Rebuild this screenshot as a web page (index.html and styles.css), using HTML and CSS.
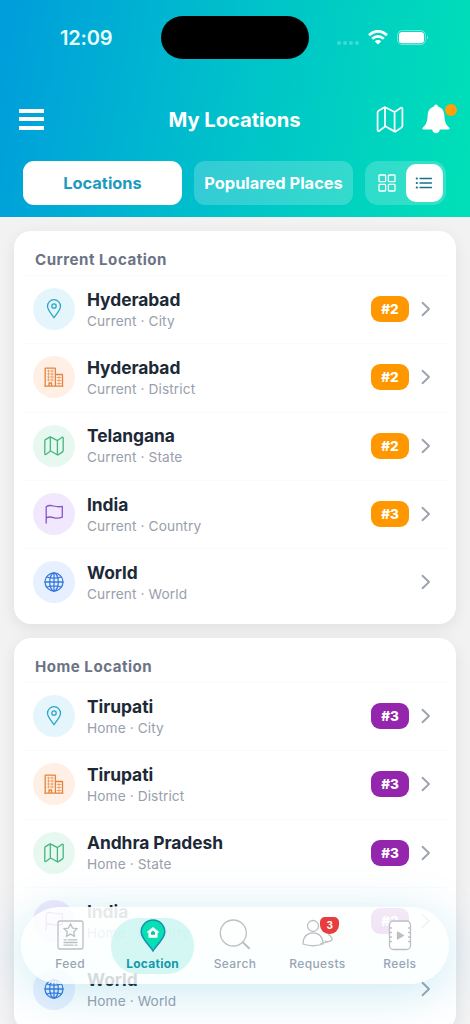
FILE: index.html
```html
<!DOCTYPE html>
<html lang="en">
<head>
<meta charset="utf-8">
<title>My Locations</title>
<link rel="stylesheet" href="styles.css">
</head>
<body>
<svg class="defs" width="0" height="0" aria-hidden="true">
  <symbol id="pin" viewBox="0 0 20 20"><path d="M10 18.800C8.300 15.600 3.500 11.200 3.500 7.200a6.500 6.500 0 0 1 13 0c0 4-4.800 8.400-6.500 11.600z"/><circle cx="10" cy="7" r="2.200"/></symbol>
  <symbol id="city" viewBox="0 0 20 20"><path d="M1.200 19V1.700q0-.6.6-.6h9q.6 0 .6.600V19M11.400 7.500h6.600q.5 0 .5.500v11M.7 19.200h18.300M5 19v-3h2.500v3"/><path d="M3.200 4h6.500M3.200 7h6.500M3.200 10h6.500M3.200 13h6.500M13 10.500h4M13 13.500h4M13 16.500h4M4.500 3v11M8 3v11M15 9.500V18" stroke-width=".8" opacity=".75"/></symbol>
  <symbol id="map" viewBox="0 0 20 20"><path d="M.8 5q0-.9.700-1.400L5.600 1.100q.6-.4 1.200 0l5.800 3q.6.400 1.200.1l4-2.700q1.400-.8 1.400.8v12.200q0 .9-.7 1.400l-4.100 2.900q-.6.300-1.200 0l-6-3.500q-.5-.3-1 0l-4 3Q.8 19.200.8 17.600zM6.300 1v14.200M13.400 4.300v14.600"/></symbol>
  <symbol id="flag" viewBox="0 0 20 20"><path d="M2.200 19V2.800Q5 .7 9.500 2t8.800.4v10.800q-4.300 1.700-8.800.4t-7.300.3"/></symbol>
  <symbol id="globe" viewBox="0 0 20 20"><circle cx="10" cy="10" r="9"/><ellipse cx="10" cy="10" rx="4.300" ry="9"/><path d="M10 1v18M1 10h18M2.800 5q7.200 2.300 14.400 0M2.800 15q7.200-2.300 14.400 0"/></symbol>
  <symbol id="chevron" viewBox="0 0 10 16"><path d="M1.500 1.800 8 8l-6.500 6.200"/></symbol>
</svg>

<header class="header">
  <div class="status">
    <span class="time">12:09</span>
    <span class="island"></span>
    <div class="signals">
      <span class="dots"><i></i><i></i><i></i><i></i></span>
      <svg class="wifi" viewBox="0 0 20 15"><g fill="none" stroke="#fff" stroke-width="2.700"><path d="M1 5.100Q10-2.600 19 5.100"/><path d="M4.200 8.800q5.800-4.900 11.600 0"/></g><path d="M10 14.500 6.700 11.200q3.300-2.600 6.600 0z" fill="#fff"/></svg>
      <svg class="battery" viewBox="0 0 32 16"><rect x=".6" y=".6" width="27.800" height="14" rx="4.500" fill="none" stroke="#fff" stroke-opacity=".45"/><rect x="2" y="2" width="25" height="11.200" rx="3.200" fill="#fff"/><path d="M30 5.500q2.200 2 0 4.300z" fill="#fff" fill-opacity=".5"/></svg>
    </div>
  </div>
  <div class="titlebar">
    <div class="menu"><i></i><i></i><i></i></div>
    <h1>My Locations</h1>
    <div class="actions">
      <svg class="map-action line"><use href="#map"/></svg>
      <div class="bell">
        <svg viewBox="0 0 28 30"><path d="M14 .5c1.200 0 1.800.8 1.900 2 4 1 6.100 4.100 6.400 8.500.4 7.200 1.600 9.600 4.600 12.200 1.300 1.300.5 2.300-.8 2.300h-8.300c-.5 5-7.100 5-7.600 0H1.900c-1.300 0-2.100-1-.8-2.300 3-2.600 4.200-5 4.600-12.200.3-4.400 2.400-7.500 6.400-8.500.1-1.200.7-2 1.900-2z" fill="#fff"/></svg>
        <span class="bell-dot"></span>
      </div>
    </div>
  </div>
  <div class="tabs">
    <div class="tab active">Locations</div>
    <div class="tab">Populared Places</div>
    <div class="views">
      <div class="view"><svg class="line" viewBox="0 0 18 18"><rect x="1" y="1" width="6.600" height="6.600" rx=".7"/><rect x="10.400" y="1" width="6.600" height="6.600" rx=".7"/><rect x="1" y="10.400" width="6.600" height="6.600" rx=".7"/><rect x="10.400" y="10.400" width="6.600" height="6.600" rx=".7"/></svg></div>
      <div class="view selected"><svg class="line" viewBox="0 0 18 18"><path d="M5 4.500h11.500M5 9h11.500M5 13.500h11.500"/><path d="M1.800 4.500h.1M1.800 9h.1M1.800 13.500h.1" stroke-width="2.200"/></svg></div>
    </div>
  </div>
</header>

<main class="content">
  <section class="card">
    <h2>Current Location</h2>
    <div class="row"><div class="icon blue"><svg class="line"><use href="#pin"/></svg></div><div class="text"><h3>Hyderabad</h3><p>Current · City</p></div><span class="rank">#2</span><svg class="chev line"><use href="#chevron"/></svg></div>
    <div class="row"><div class="icon orange"><svg class="line"><use href="#city"/></svg></div><div class="text"><h3>Hyderabad</h3><p>Current · District</p></div><span class="rank">#2</span><svg class="chev line"><use href="#chevron"/></svg></div>
    <div class="row"><div class="icon green"><svg class="line"><use href="#map"/></svg></div><div class="text"><h3>Telangana</h3><p>Current · State</p></div><span class="rank">#2</span><svg class="chev line"><use href="#chevron"/></svg></div>
    <div class="row"><div class="icon purple"><svg class="line"><use href="#flag"/></svg></div><div class="text"><h3>India</h3><p>Current · Country</p></div><span class="rank">#3</span><svg class="chev line"><use href="#chevron"/></svg></div>
    <div class="row"><div class="icon royal"><svg class="line"><use href="#globe"/></svg></div><div class="text"><h3>World</h3><p>Current · World</p></div><svg class="chev line"><use href="#chevron"/></svg></div>
  </section>
  <section class="card home">
    <h2>Home Location</h2>
    <div class="row"><div class="icon blue"><svg class="line"><use href="#pin"/></svg></div><div class="text"><h3>Tirupati</h3><p>Home · City</p></div><span class="rank">#3</span><svg class="chev line"><use href="#chevron"/></svg></div>
    <div class="row"><div class="icon orange"><svg class="line"><use href="#city"/></svg></div><div class="text"><h3>Tirupati</h3><p>Home · District</p></div><span class="rank">#3</span><svg class="chev line"><use href="#chevron"/></svg></div>
    <div class="row"><div class="icon green"><svg class="line"><use href="#map"/></svg></div><div class="text"><h3>Andhra Pradesh</h3><p>Home · State</p></div><span class="rank">#3</span><svg class="chev line"><use href="#chevron"/></svg></div>
    <div class="row"><div class="icon purple"><svg class="line"><use href="#flag"/></svg></div><div class="text"><h3>India</h3><p>Home · Country</p></div><span class="rank">#3</span><svg class="chev line"><use href="#chevron"/></svg></div>
    <div class="row"><div class="icon royal"><svg class="line"><use href="#globe"/></svg></div><div class="text"><h3>World</h3><p>Home · World</p></div><svg class="chev line"><use href="#chevron"/></svg></div>
  </section>
</main>

<nav class="nav">
  <div class="item">
    <svg class="line" viewBox="0 0 32 34"><rect x="4" y="3" width="25" height="28" rx="2"/><path d="m16.500 5.800 2 4.300 4.700.5-3.500 3.200.9 4.600-4.100-2.300-4.100 2.300.9-4.600-3.500-3.200 4.700-.5zM10 21.800h2.500M14.500 21.800h8.500M10 24.500h13M10 27.200h9M21 27.200h2"/></svg>
    <span>Feed</span>
  </div>
  <div class="item current">
    <svg viewBox="0 0 32 34"><path d="M16 33C13.300 28 4.200 21 4.200 13.800a11.800 11.800 0 0 1 23.600 0c0 7.200-9.100 14.200-11.800 19.200z" fill="#08dfb3" stroke="#168fb0" stroke-width="1.500"/><path d="m16 9.200 6 5.100h-1.700v5.200h-8.600v-5.200H10z" fill="#fff" stroke="#fff" stroke-linejoin="round" stroke-width=".5"/><path d="m16 12.500 2 1.800v2.500h-4v-2.500z" fill="#08c5a6"/></svg>
    <span>Location</span>
  </div>
  <div class="item">
    <svg class="line search" viewBox="0 0 32 34"><circle cx="14.300" cy="15" r="13"/><path d="m24 24.500 6 5.800" stroke-width="2"/></svg>
    <span>Search</span>
  </div>
  <div class="item">
    <svg class="line" viewBox="0 0 32 34"><circle cx="12" cy="8" r="5.500"/><path d="M2 26c0-7 4-11.200 10-11.200S22 19 22 26q-10 3.500-20 0zM20 25.500q8-1.500 11-3.500.5-3-3.500-5.500M24 23q4 1.500 7-1"/></svg>
    <b class="badge">3</b>
    <span>Requests</span>
  </div>
  <div class="item">
    <svg class="line" viewBox="0 0 32 34"><rect x="5.500" y="3" width="21" height="28.500" rx="4" fill="#fff"/><path d="M6 10h1.500M6 14.500h1.500M6 19h1.500M6 23.500h1.500M24.500 10h1.500M24.500 14.500h1.500M24.500 19h1.500M24.500 23.500h1.500"/><path d="m13.500 14 6 3.500-6 3.500z" fill="#bdbfc2"/></svg>
    <span>Reels</span>
  </div>
</nav>
</body>
</html>
```
FILE: styles.css
```css
* { box-sizing: border-box; }
body {
  margin: 0;
  width: 470px;
  height: 1024px;
  overflow: hidden;
  position: relative;
  background: #f2f2f3;
  font-family: Inter, "Liberation Sans", sans-serif;
  color: #1d2937;
}
h1, h2, h3, p { margin: 0; }
.defs { position: absolute; }
.line {
  fill: none;
  stroke: currentColor;
  stroke-width: 1.3;
  stroke-linecap: round;
  stroke-linejoin: round;
}

.header {
  height: 217px;
  padding-top: 16px;
  background: linear-gradient(100deg, #009fdb 3%, #00c2ca 50%, #00dfb8 98%);
  color: #fff;
}
.status {
  height: 43px;
  display: grid;
  grid-template-columns: 161px 148px 1fr;
  align-items: center;
}
.time {
  padding: 1px 0 0 60px;
  font-size: 20px;
  font-weight: 600;
  letter-spacing: -.2px;
  color: #e6ffff;
}
.island { height: 43px; border-radius: 22px; background: #000; }
.signals { display: flex; align-items: center; padding-left: 28px; }
.dots { display: flex; gap: 2px; margin: 10px 9px 0 0; }
.dots i { width: 4px; height: 4px; border-radius: 50%; background: #fff; opacity: .25; }
.wifi { width: 20px; height: 15px; margin-right: 9px; }
.battery { width: 32px; height: 16px; }

.titlebar {
  margin-top: 36px;
  height: 48px;
  padding: 0 20px 0 19px;
  display: grid;
  grid-template-columns: 90px 1fr 90px;
  align-items: center;
}
.menu { display: grid; gap: 4.500px; width: 25px; }
.menu i { height: 4px; background: #fff; }
.titlebar h1 { padding-top: 1px; text-align: center; font-size: 20.200px; font-weight: 700; letter-spacing: -.05px; }
.actions { display: flex; justify-content: flex-end; align-items: center; gap: 18px; }
.map-action { width: 28px; height: 27px; }
.bell { position: relative; width: 28px; height: 30px; }
.bell svg { display: block; width: 28px; height: 30px; }
.bell-dot {
  position: absolute;
  left: 23px;
  top: 0;
  width: 12px;
  height: 12px;
  border-radius: 50%;
  background: #ff9f0a;
}

.tabs { margin: 18px 23px 0; display: flex; gap: 12px; height: 44px; }
.tab {
  width: 159px;
  padding-bottom: 1px;
  border-radius: 11px;
  background: rgba(255, 255, 255, .2);
  display: grid;
  place-items: center;
  font-size: 16.400px;
  font-weight: 700;
  white-space: nowrap;
}
.tab.active { background: #fff; color: #1c9bbd; }
.views { width: 81px; padding: 3px; display: flex; border-radius: 13px; background: rgba(255, 255, 255, .19); }
.view { flex: 1; display: grid; place-items: center; border-radius: 10px; }
.view svg { width: 18px; height: 18px; }
.view.selected { background: #fff; color: #16708f; }

.content { padding: 14px; display: grid; gap: 14px; }
.card {
  height: 393px;
  padding-top: 12px;
  border-radius: 17px;
  background: #fff;
  box-shadow: 0 4px 15px rgba(0, 0, 0, .08);
}
.card h2 {
  height: 32px;
  padding-left: 21px;
  font-size: 15.100px;
  line-height: 33px;
  font-weight: 700;
  letter-spacing: .5px;
  color: #6b7485;
}
.row {
  height: 68.300px;
  margin: 0 8px;
  padding: 0 17px 1px 11px;
  display: flex;
  align-items: center;
  border-top: 1px solid #fbfbfb;
}
.icon { width: 42px; height: 42px; border-radius: 50%; display: grid; place-items: center; }
.icon svg { width: 20px; height: 20px; }
.blue { color: #29a6c4; background: #e5f5fc; }
.orange { color: #e4833b; background: #ffefe5; }
.green { color: #43b67c; background: #e7f8f0; }
.purple { color: #8a52c9; background: #f1e8fd; }
.royal { color: #3979dc; background: #e7f0fe; }
.text { flex: 1; padding: 2px 0 0 12px; }
.text h3 { font-size: 17.400px; line-height: 22px; font-weight: 700; letter-spacing: -.05px; }
.text p { font-size: 13.700px; line-height: 21px; letter-spacing: .1px; color: #98a0ac; }
.rank {
  width: 38px;
  height: 26px;
  border-radius: 9px;
  background: #ff9800;
  color: #fff;
  display: grid;
  place-items: center;
  font-size: 13.500px;
  font-weight: 800;
}
.home .rank { background: #9425ad; }
.chev { width: 10px; height: 16px; margin-left: 12px; color: #9ca3af; stroke-width: 1.900; }

.nav {
  position: absolute;
  left: 21px;
  top: 907px;
  width: 428px;
  height: 77px;
  padding: 0 8px;
  display: flex;
  border-radius: 39px;
  background: linear-gradient(rgba(254, 255, 255, .9), rgba(250, 255, 255, .82));
  box-shadow: 0 8px 48px rgba(0, 155, 205, .21);
}
.item {
  position: relative;
  flex: 1;
  height: 56px;
  margin-top: 11px;
  display: flex;
  flex-direction: column;
  align-items: center;
  color: #bcc0c3;
}
.item svg { width: 32px; height: 34px; }
.item span { font-size: 12px; line-height: 18px; margin-top: 3px; font-weight: 500; letter-spacing: .4px; color: #98a5b4; }
.item.current { border-radius: 27px; background: rgba(190, 242, 237, .65); }
.item.current span { color: #1598ad; font-weight: 700; letter-spacing: .25px; }
.badge {
  position: absolute;
  left: 44px;
  top: -1px;
  width: 19px;
  height: 17px;
  border-radius: 5px 5px 9px 9px;
  background: #e83d3d;
  color: #fff;
  font-size: 10px;
  line-height: 16px;
  text-align: center;
}
```
